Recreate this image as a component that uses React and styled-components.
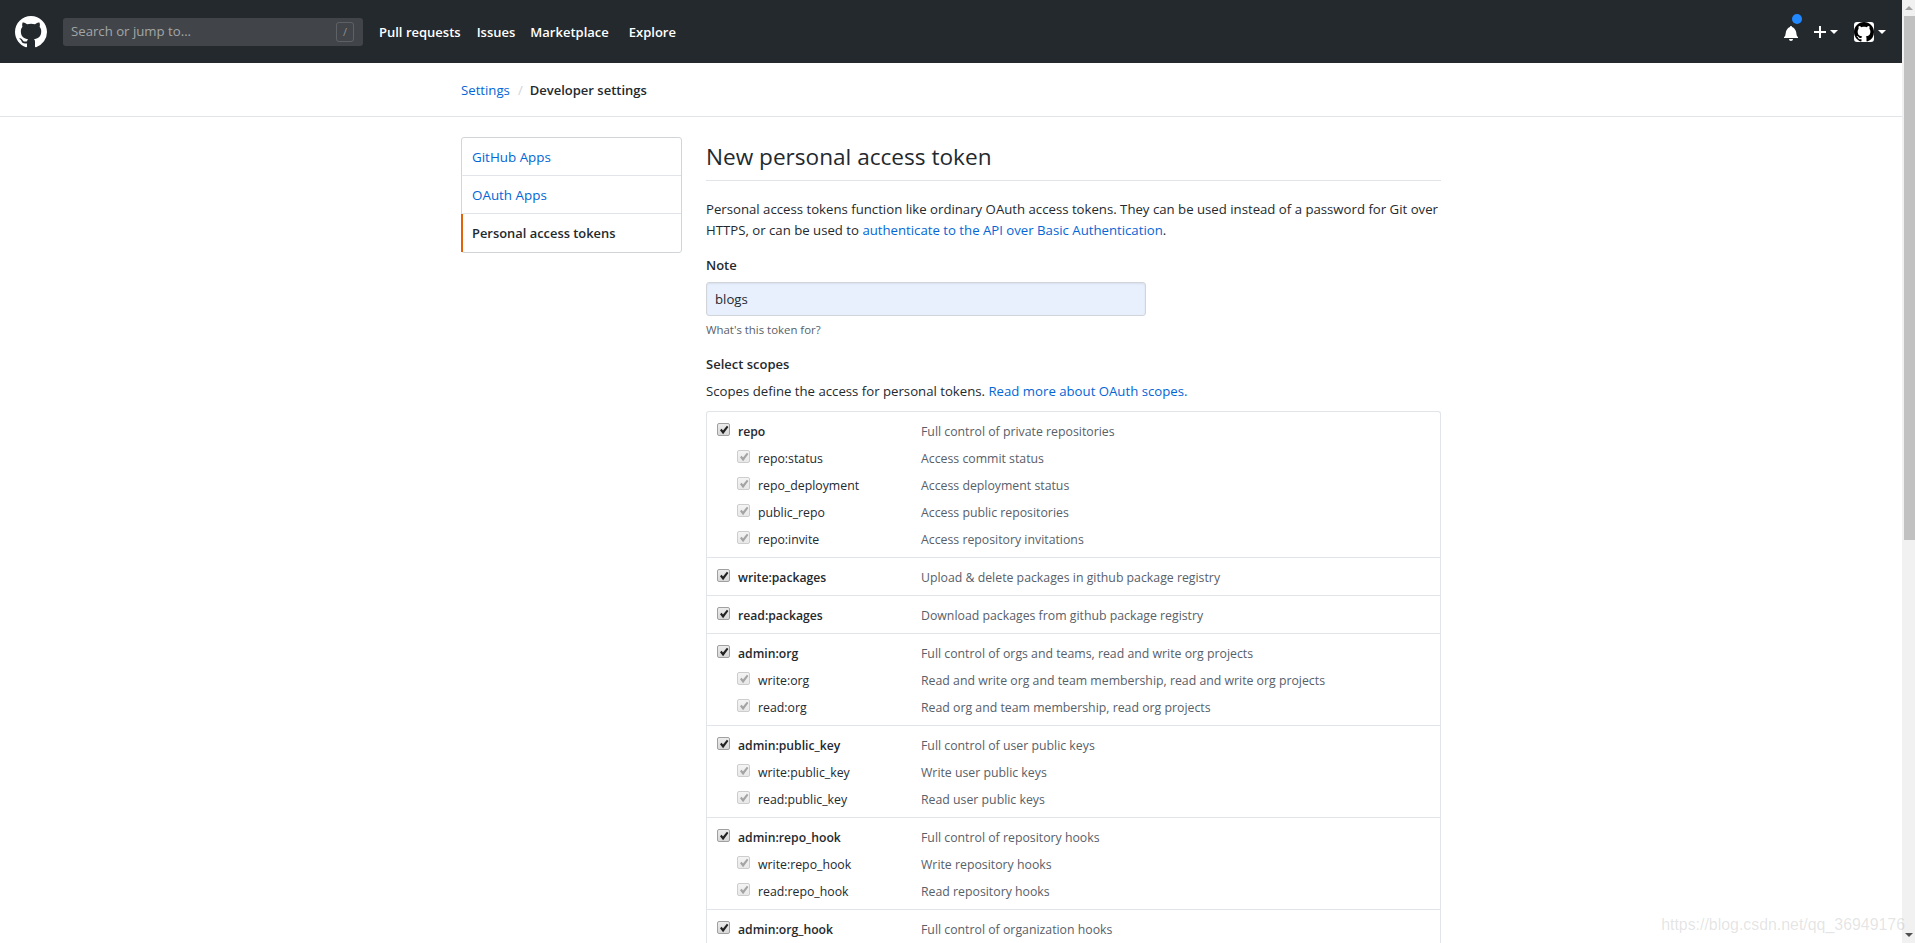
import React from "react";
import styled, { createGlobalStyle } from "styled-components";

const GlobalStyle = createGlobalStyle`
  html, body {
    margin: 0;
    height: 100%;
    overflow: hidden;
    background: #fff;
  }
  body {
    font-family: "Open Sans", "Liberation Sans", sans-serif;
    font-size: 13.2px;
    line-height: 21px;
    color: #24292e;
  }
`;

const Viewport = styled.div`
  display: flex;
  height: 943px;
  overflow: hidden;
`;

const Page = styled.div`
  flex: 1;
  min-width: 0;
  overflow: hidden;
`;

const Header = styled.header`
  display: flex;
  align-items: center;
  height: 63px;
  padding: 0 16px 0 15px;
  background: #24292e;
  color: #fff;
`;

const Logo = styled.svg`
  width: 32px;
  height: 32px;
  fill: #fff;
  flex: none;
`;

const Search = styled.div`
  display: flex;
  align-items: center;
  justify-content: space-between;
  box-sizing: border-box;
  width: 300px;
  height: 28px;
  margin-left: 16px;
  padding: 0 9px 0 8px;
  border-radius: 3px;
  background: #414549;
  color: #a3a5a7;
`;

const SlashKey = styled.span`
  display: flex;
  align-items: center;
  justify-content: center;
  box-sizing: border-box;
  width: 18px;
  height: 20px;
  border: 1px solid #5f6265;
  border-radius: 3px;
  font-size: 11px;
  color: #8b8e90;
`;

const Nav = styled.nav`
  display: flex;
  margin-left: 16px;
  padding-top: 2px;
`;

const NavLink = styled.a`
  margin-right: ${(p) => p.$gap}px;
  color: #fff;
  font-size: 13px;
  font-weight: 600;
  white-space: nowrap;
`;

const HeaderRight = styled.div`
  display: flex;
  align-items: center;
  margin-left: auto;
`;

const BellWrap = styled.span`
  position: relative;
  display: flex;
  width: 14px;
  height: 16px;
  margin-top: 3px;
  margin-right: 16px;
`;

const Dot = styled.span`
  position: absolute;
  top: -11px;
  left: 8px;
  box-sizing: border-box;
  width: 10px;
  height: 10px;
  border-radius: 50%;
  background: #2188ff;
`;

const HeaderIcon = styled.svg`
  fill: #fff;
  display: block;
`;

const Caret = styled.span`
  width: 0;
  height: 0;
  margin-left: 4px;
  border-style: solid;
  border-width: 4px 4px 0;
  border-color: #fff transparent transparent;
`;

const Avatar = styled.span`
  display: flex;
  width: 20px;
  height: 20px;
  margin-left: 16px;
  border-radius: 3px;
  background: #fff;
`;

const SubHead = styled.div`
  display: flex;
  align-items: center;
  box-sizing: border-box;
  height: 54px;
  padding: 2px 0 0 461px;
  border-bottom: 1px solid #e1e4e8;
`;

const Crumb = styled.a`
  color: #0366d6;
`;

const CrumbDivider = styled.span`
  margin: 0 7px 0 8px;
  color: #d1d5da;
`;

const CrumbCurrent = styled.span`
  font-size: 13px;
  font-weight: 600;
`;

const Container = styled.div`
  display: flex;
  width: 980px;
  margin: 20px auto 0;
`;

const SideMenu = styled.aside`
  flex: none;
  align-self: flex-start;
  box-sizing: border-box;
  width: 221px;
  margin-right: 24px;
  border: 1px solid #d1d5da;
  border-radius: 3px;
`;

const MenuItem = styled.a`
  display: block;
  box-sizing: border-box;
  height: 38px;
  padding: 9px 9px 7px;
  line-height: 21px;
  color: ${(p) => (p.$active ? "#24292e" : "#0366d6")};
  font-size: ${(p) => (p.$active ? 12.9 : 13.4)}px;
  font-weight: ${(p) => (p.$active ? 600 : 400)};
  border-bottom: ${(p) => (p.$last ? "0" : "1px solid #e1e4e8")};
  border-left: 2px solid ${(p) => (p.$active ? "#e36209" : "transparent")};
  margin-left: -1px;
`;

const Main = styled.main`
  flex: 1;
  min-width: 0;
`;

const Title = styled.h2`
  margin: 0 0 18px;
  height: 44px;
  box-sizing: border-box;
  padding-bottom: 8px;
  border-bottom: 1px solid #e1e4e8;
  font-size: 22.6px;
  line-height: 40px;
  font-weight: 400;
`;

const Intro = styled.p`
  margin: 0 0 14px;
`;

const Link = styled.a`
  color: #0366d6;
`;

const FieldLabel = styled.div`
  font-size: 13px;
  font-weight: 600;
  margin-bottom: 6px;
`;

const NoteInput = styled.input`
  display: block;
  box-sizing: border-box;
  width: 440px;
  height: 34px;
  padding: 0 8px;
  border: 1px solid #d1d5da;
  border-radius: 3px;
  background: #e8f0fe;
  box-shadow: inset 0 1px 2px rgba(27, 31, 35, 0.075);
  font: inherit;
  color: #24292e;
  outline: none;
`;

const Hint = styled.div`
  margin-top: 5px;
  font-size: 11.4px;
  line-height: 18px;
  color: #586069;
`;

const ScopesTitle = styled(FieldLabel)`
  margin-top: 15px;
  margin-bottom: 6px;
`;

const ScopesNote = styled.p`
  margin: 0 0 9px;
`;

const ScopesBox = styled.div`
  border: 1px solid #e1e4e8;
  border-bottom: 0;
  border-radius: 3px 3px 0 0;
`;

const Section = styled.section`
  padding: 9px 0 7px 10px;
  border-bottom: 1px solid #e1e4e8;
`;

const ScopeRow = styled.div`
  display: flex;
  align-items: center;
  height: 21px;
  margin-top: ${(p) => (p.$sub ? 6 : 0)}px;
  padding-left: ${(p) => (p.$sub ? 20 : 0)}px;
`;

const Box = styled.span`
  display: flex;
  align-items: center;
  justify-content: center;
  flex: none;
  box-sizing: border-box;
  width: 13px;
  height: 13px;
  margin-top: -4px;
  margin-right: 8px;
  border: 1px solid ${(p) => (p.$sub ? "#cdcdcd" : "#a0a0a0")};
  border-radius: 2px;
  background: linear-gradient(${(p) => (p.$sub ? "#f4f4f4, #e8e8e8" : "#ececec, #d8d8d8")});
`;

const Tick = styled.svg`
  width: 10px;
  height: 10px;
  fill: ${(p) => (p.$sub ? "#a4a4a4" : "#222")};
`;

const ScopeName = styled.span`
  width: ${(p) => (p.$sub ? 163 : 183)}px;
  flex: none;
  font-size: ${(p) => (p.$sub ? 12.3 : 12.2)}px;
  font-weight: ${(p) => (p.$sub ? 400 : 600)};
  white-space: nowrap;
`;

const ScopeDesc = styled.span`
  font-size: 12.3px;
  color: #586069;
  white-space: nowrap;
`;

const ScrollTrack = styled.div`
  flex: none;
  width: 13px;
  display: flex;
  flex-direction: column;
  background: #f1f1f1;
`;

const ScrollButton = styled.span`
  display: flex;
  align-items: center;
  justify-content: center;
  height: 16px;
  flex: none;
  margin-top: ${(p) => (p.$down ? "auto" : 0)};
`;

const ScrollArrow = styled.span`
  width: 0;
  height: 0;
  border-style: solid;
  border-width: ${(p) => (p.$down ? "4px 4px 0" : "0 4px 4px")};
  border-color: ${(p) =>
    p.$down
      ? "#505050 transparent transparent"
      : "transparent transparent #a3a3a3"};
`;

const ScrollThumb = styled.span`
  display: block;
  height: 524px;
  margin-left: 2px;
  background: #c1c1c1;
`;

const Watermark = styled.span`
  position: absolute;
  right: 10px;
  bottom: 9px;
  font-family: "Liberation Sans", sans-serif;
  font-size: 15.9px;
  line-height: 18px;
  color: rgba(120, 120, 120, 0.2);
`;

const MARK =
  "M8 0C3.58 0 0 3.58 0 8c0 3.54 2.29 6.53 5.47 7.59.4.07.55-.17.55-.38 0-.19-.01-.82-.01-1.49-2.01.37-2.53-.49-2.69-.94-.09-.23-.48-.94-.82-1.13-.28-.15-.68-.52-.01-.53.63-.01 1.08.58 1.23.82.72 1.21 1.87.87 2.33.66.07-.52.28-.87.51-1.07-1.78-.2-3.64-.89-3.64-3.95 0-.87.31-1.59.82-2.15-.08-.2-.36-1.02.08-2.12 0 0 .67-.21 2.2.82.64-.18 1.32-.27 2-.27.68 0 1.36.09 2 .27 1.53-1.04 2.2-.82 2.2-.82.44 1.1.16 1.92.08 2.12.51.56.82 1.27.82 2.15 0 3.07-1.87 3.75-3.65 3.95.29.25.54.73.54 1.48 0 1.07-.01 1.93-.01 2.2 0 .21.15.46.55.38A8.013 8.013 0 0016 8c0-4.42-3.58-8-8-8z";

const sections = [
  {
    name: "repo",
    desc: "Full control of private repositories",
    subs: [
      ["repo:status", "Access commit status"],
      ["repo_deployment", "Access deployment status"],
      ["public_repo", "Access public repositories"],
      ["repo:invite", "Access repository invitations"],
    ],
  },
  { name: "write:packages", desc: "Upload & delete packages in github package registry" },
  { name: "read:packages", desc: "Download packages from github package registry" },
  {
    name: "admin:org",
    desc: "Full control of orgs and teams, read and write org projects",
    subs: [
      ["write:org", "Read and write org and team membership, read and write org projects"],
      ["read:org", "Read org and team membership, read org projects"],
    ],
  },
  {
    name: "admin:public_key",
    desc: "Full control of user public keys",
    subs: [
      ["write:public_key", "Write user public keys"],
      ["read:public_key", "Read user public keys"],
    ],
  },
  {
    name: "admin:repo_hook",
    desc: "Full control of repository hooks",
    subs: [
      ["write:repo_hook", "Write repository hooks"],
      ["read:repo_hook", "Read repository hooks"],
    ],
  },
  { name: "admin:org_hook", desc: "Full control of organization hooks" },
];

function Check({ sub }) {
  return (
    <Box $sub={sub}>
      <Tick $sub={sub} viewBox="0 0 10 10">
        <path d="M1 5.2 2.6 3.8 4 5.4 7.9 .8 9.4 2 4.1 9.2z" />
      </Tick>
    </Box>
  );
}

function App() {
  return (
    <Viewport>
      <GlobalStyle />
      <Page>
        <Header>
          <Logo viewBox="0 0 16 16">
            <path fillRule="evenodd" d={MARK} />
          </Logo>
          <Search>
            Search or jump to...
            <SlashKey>/</SlashKey>
          </Search>
          <Nav>
            <NavLink $gap={16}>Pull requests</NavLink>
            <NavLink $gap={15}>Issues</NavLink>
            <NavLink $gap={20}>Marketplace</NavLink>
            <NavLink $gap={0}>Explore</NavLink>
          </Nav>
          <HeaderRight>
            <BellWrap>
              <HeaderIcon width="14" height="16" viewBox="0 0 14 16">
                <path d="M14 12v1H0v-1l.73-.58c.77-.77.81-2.55 1.19-4.42C2.69 3.23 6 2 6 2c0-.55.45-1 1-1s1 .45 1 1c0 0 3.39 1.23 4.16 5 .38 1.88.42 3.66 1.19 4.42l.66.58H14zm-7 4c1.11 0 2-.89 2-2H5c0 1.11.89 2 2 2z" />
              </HeaderIcon>
              <Dot />
            </BellWrap>
            <HeaderIcon width="12" height="16" viewBox="0 0 12 16">
              <path d="M12 9H7v5H5V9H0V7h5V2h2v5h5v2z" />
            </HeaderIcon>
            <Caret />
            <Avatar>
              <svg width="20" height="20" viewBox="0 0 16 16">
                <path fillRule="evenodd" d={MARK} />
              </svg>
            </Avatar>
            <Caret />
          </HeaderRight>
        </Header>

        <SubHead>
          <Crumb>Settings</Crumb>
          <CrumbDivider>/</CrumbDivider>
          <CrumbCurrent>Developer settings</CrumbCurrent>
        </SubHead>

        <Container>
          <SideMenu>
            <MenuItem>GitHub Apps</MenuItem>
            <MenuItem>OAuth Apps</MenuItem>
            <MenuItem $active $last>Personal access tokens</MenuItem>
          </SideMenu>
          <Main>
            <Title>New personal access token</Title>
            <Intro>
              Personal access tokens function like ordinary OAuth access tokens. They can be used instead of a password for Git over
              <br />
              HTTPS, or can be used to <Link>authenticate to the API over Basic Authentication</Link>.
            </Intro>
            <FieldLabel>Note</FieldLabel>
            <NoteInput defaultValue="blogs" />
            <Hint>What's this token for?</Hint>
            <ScopesTitle>Select scopes</ScopesTitle>
            <ScopesNote>
              Scopes define the access for personal tokens. <Link>Read more about OAuth scopes.</Link>
            </ScopesNote>
            <ScopesBox>
              {sections.map((s) => (
                <Section key={s.name}>
                  <ScopeRow>
                    <Check />
                    <ScopeName>{s.name}</ScopeName>
                    <ScopeDesc>{s.desc}</ScopeDesc>
                  </ScopeRow>
                  {(s.subs || []).map(([name, desc]) => (
                    <ScopeRow $sub key={name}>
                      <Check sub />
                      <ScopeName $sub>{name}</ScopeName>
                      <ScopeDesc>{desc}</ScopeDesc>
                    </ScopeRow>
                  ))}
                </Section>
              ))}
            </ScopesBox>
          </Main>
        </Container>
      </Page>
      <ScrollTrack>
        <ScrollButton>
          <ScrollArrow />
        </ScrollButton>
        <ScrollThumb />
        <ScrollButton $down>
          <ScrollArrow $down />
        </ScrollButton>
      </ScrollTrack>
      <Watermark>https://blog.csdn.net/qq_36949176</Watermark>
    </Viewport>
  );
}

export default App;
